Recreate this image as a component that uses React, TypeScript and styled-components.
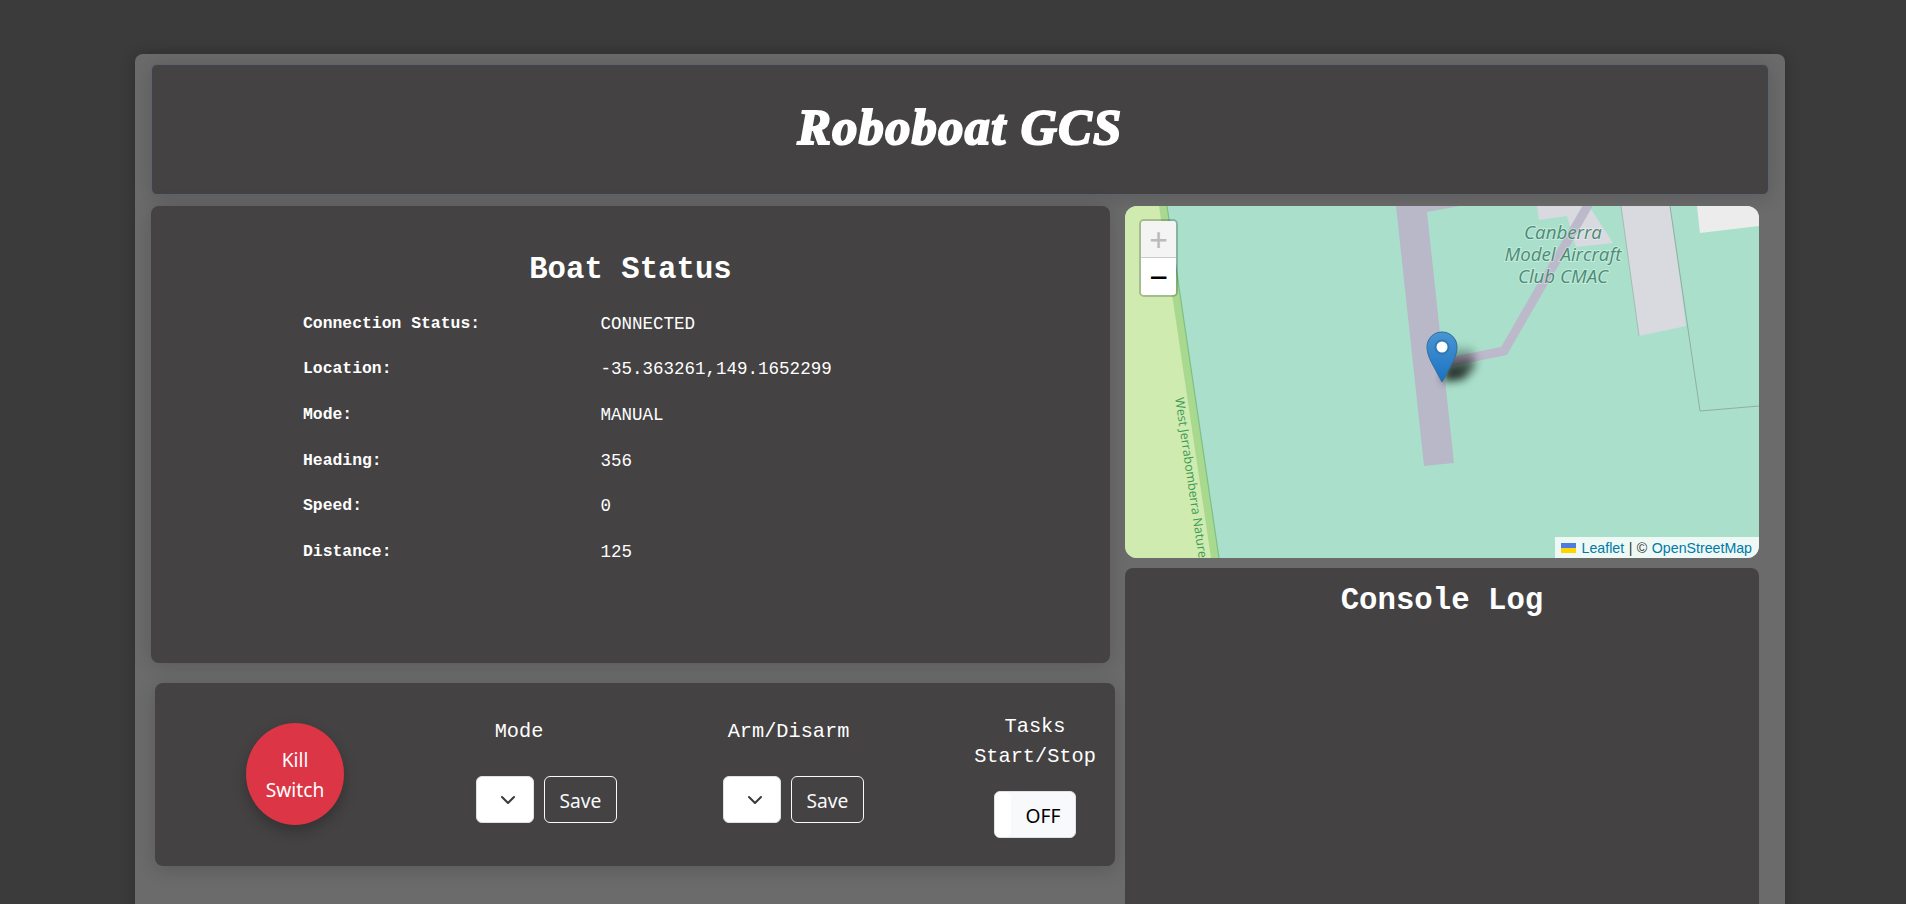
import React from 'react';
import styled, { createGlobalStyle } from 'styled-components';

const GlobalStyle = createGlobalStyle`
  html, body {
    margin: 0;
    height: 100%;
    overflow: hidden;
    background: #3b3b3b;
  }
  * { box-sizing: border-box; }
`;

const MONO = `'Liberation Mono', monospace`;
const SANS = `'Noto Sans', 'Open Sans', sans-serif`;
const PANEL = '#444243';

const Page = styled.div`
  padding: 54px 0 0 135px;
  display: flex;
  height: 100vh;
  background: #3b3b3b;
`;

const Shell = styled.div`
  width: 1650px;
  min-height: 1100px;
  padding: 10px 16px;
  display: flex;
  flex-direction: column;
  gap: 11px;
  background: #6c6b6b;
  border-radius: 8px;
  box-shadow: 0 0 16px rgba(0, 0, 0, 0.2);
`;

const Header = styled.header`
  height: 131px;
  padding-bottom: 6px;
  display: flex;
  align-items: center;
  justify-content: center;
  background: ${PANEL};
  border: 1px solid #5c6470;
  border-radius: 6px;
  box-shadow: 0 2px 20px rgba(0, 0, 0, 0.16);
`;

const Title = styled.h1`
  margin: 0;
  font-family: 'Liberation Serif', serif;
  font-size: 50px;
  font-style: italic;
  font-weight: 700;
  letter-spacing: 1.5px;
  color: #fff;
  -webkit-text-stroke: 2.2px #fff;
`;

const Columns = styled.div`
  display: flex;
  gap: 15px;
`;

const LeftColumn = styled.div`
  width: 959px;
  display: flex;
  flex-direction: column;
  gap: 20px;
`;

const RightColumn = styled.div`
  width: 634px;
  display: flex;
  flex-direction: column;
  gap: 10px;
`;

const StatusPanel = styled.section`
  height: 457px;
  padding-top: 46px;
  background: ${PANEL};
  border-radius: 8px;
  box-shadow: 0 2px 20px rgba(0, 0, 0, 0.16);
`;

const PanelTitle = styled.h2`
  margin: 0;
  font-family: ${MONO};
  font-size: 30.7px;
  line-height: 36px;
  font-weight: 700;
  text-align: center;
  color: #fff;
`;

const StatusTable = styled.div`
  margin-top: 13px;
  padding-left: 152px;
`;

const StatusRow = styled.div`
  height: 45.6px;
  display: flex;
  align-items: center;
`;

const StatusLabel = styled.span`
  width: 297.6px;
  margin-top: -1px;
  font-family: ${MONO};
  font-size: 16.4px;
  font-weight: 700;
  color: #fff;
`;

const StatusValue = styled.span`
  font-family: ${MONO};
  font-size: 17.5px;
  color: #fff;
`;

const ControlPanel = styled.section`
  width: 960px;
  margin-left: 4px;
  padding: 28px 17px 28px 91px;
  display: flex;
  align-items: flex-start;
  background: ${PANEL};
  border-radius: 8px;
  box-shadow: 0 4px 20px rgba(0, 0, 0, 0.16);
`;

const KillButton = styled.button`
  width: 98px;
  height: 102px;
  margin-top: -2px;
  padding: 3px 0 0;
  align-self: center;
  flex: none;
  border: none;
  border-radius: 50%;
  background: #dc3545;
  color: #fff;
  font-family: ${SANS};
  font-size: 19.2px;
  line-height: 30px;
  box-shadow: 0 6px 14px rgba(0, 0, 0, 0.25);
`;

const ControlGroup = styled.div<{ $left: number; $labelShift: number }>`
  width: 141px;
  margin-left: ${p => p.$left}px;
  margin-top: 5px;
  flex: none;
  display: flex;
  flex-direction: column;
  align-items: center;
  gap: 30px;

  & > label {
    margin-right: ${p => p.$labelShift}px;
  }
`;

const ControlLabel = styled.label`
  padding-top: 1px;
  margin-bottom: -1px;
  font-family: ${MONO};
  font-size: 20.3px;
  line-height: 30px;
  text-align: center;
  color: #fff;
  white-space: pre-line;
`;

const ControlRow = styled.div`
  display: flex;
  gap: 10px;
`;

const SelectBox = styled.div`
  width: 58px;
  height: 47px;
  padding-left: 6px;
  display: flex;
  align-items: center;
  justify-content: center;
  background: #fff;
  border: 1px solid #dee2e6;
  border-radius: 6px;
`;

const SaveButton = styled.button`
  width: 73px;
  height: 47px;
  padding: 2px 0 0;
  background: transparent;
  border: 1px solid #f8f9fa;
  border-radius: 6px;
  color: #f8f9fa;
  font-family: ${SANS};
  font-size: 19.2px;
`;

const TasksGroup = styled.div`
  width: 124px;
  margin-left: 109px;
  flex: none;
  display: flex;
  flex-direction: column;
  align-items: center;
  gap: 20px;
`;

const Toggle = styled.div`
  position: relative;
  width: 82px;
  height: 47px;
  padding: 2px 0 0 16px;
  display: flex;
  align-items: center;
  justify-content: center;
  background: #f8f9fa;
  border: 1px solid #dee2e6;
  border-radius: 6px;
  color: #000;
  font-family: ${SANS};
  font-size: 19.2px;
  overflow: hidden;
`;

const ToggleHandle = styled.span`
  position: absolute;
  left: 0;
  top: 0;
  bottom: 0;
  width: 16px;
  background: #fff;
  border-radius: 0 6px 6px 0;
`;

const MapPanel = styled.div`
  position: relative;
  height: 352px;
  overflow: hidden;
  background: #aae0cb;
  border-radius: 12px;
`;

const MapArt = styled.svg`
  display: block;
  width: 634px;
  height: 352px;
`;

const MarkerShadow = styled.svg`
  position: absolute;
  left: 310px;
  top: 125px;
  width: 60px;
  height: 65px;
`;

const MarkerPin = styled.svg`
  position: absolute;
  left: 301px;
  top: 125px;
  width: 32px;
  height: 52px;
`;

const ZoomControl = styled.div`
  position: absolute;
  left: 14px;
  top: 13px;
  width: 39px;
  border: 2px solid rgba(0, 0, 0, 0.2);
  border-radius: 5px;
  background-clip: padding-box;
  display: flex;
  flex-direction: column;
`;

const ZoomButton = styled.div<{ $disabled?: boolean }>`
  height: 37px;
  display: flex;
  align-items: center;
  justify-content: center;
  background: ${p => (p.$disabled ? '#f4f4f4' : '#fff')};
  color: ${p => (p.$disabled ? '#bbb' : '#000')};
  font-family: 'DejaVu Sans Mono', monospace;
  font-size: 30px;
  font-weight: 400;
  border-radius: ${p => (p.$disabled ? '3px 3px 0 0' : '0 0 3px 3px')};
  border-bottom: ${p => (p.$disabled ? '1px solid #ccc' : 'none')};
`;

const Attribution = styled.div`
  position: absolute;
  right: 0;
  bottom: 0;
  height: 21px;
  padding: 0 7px 0 6px;
  display: flex;
  align-items: center;
  gap: 4.5px;
  background: rgba(255, 255, 255, 0.8);
  font-family: 'Liberation Sans', sans-serif;
  font-size: 14.2px;
  color: #333;
`;

const AttributionLink = styled.span`
  color: #0078a8;
`;

const FlagIcon = styled.svg`
  width: 15px;
  height: 10px;
  margin-right: 1px;
`;

const ConsolePanel = styled.section`
  height: 560px;
  padding-top: 15px;
  background: ${PANEL};
  border-radius: 8px;
`;

const STATUS = [
  ['Connection Status:', 'CONNECTED'],
  ['Location:', '-35.363261,149.1652299'],
  ['Mode:', 'MANUAL'],
  ['Heading:', '356'],
  ['Speed:', '0'],
  ['Distance:', '125'],
];

const Chevron = () => (
  <svg width="16" height="16" viewBox="0 0 16 16" fill="none">
    <path d="m2 5 6 6 6-6" stroke="#343a40" strokeWidth="2" strokeLinecap="round" strokeLinejoin="round" />
  </svg>
);

const labelStyle = {
  fontFamily: "'Open Sans', sans-serif",
  fontStyle: 'italic',
  fontSize: 18.7,
  fill: '#4a8c76',
  stroke: 'rgba(255,255,255,0.35)',
  strokeWidth: 2,
  paintOrder: 'stroke',
} as React.CSSProperties;

const MapTiles = () => (
  <MapArt viewBox="0 0 634 352">
    <polygon points="0,0 36,0 88,352 0,352" fill="#cfebb0" />
    <polygon points="34,0 42,0 94,352 86,352" fill="#a9d98e" />
    <polyline points="42,0 94,352" fill="none" stroke="#7cc087" strokeWidth="1.2" />
    <polygon points="412,0 414,14 442,10 451,41 488,37 464,0" fill="#d9d9e0" />
    <polygon points="496,0 545,0 561,120 514,130" fill="#d9d9e0" />
    <polyline points="496,0 514,130" fill="none" stroke="#a3bdb0" strokeWidth="1" />
    <polyline points="545,0 575,205 634,200" fill="none" stroke="#92ad9f" strokeWidth="1" />
    <polygon points="572,0 634,0 634,20 575,27" fill="#ececec" />
    <polyline points="320,157 379,145 466,-6" fill="none" stroke="#bcb9cb" strokeWidth="9" />
    <polygon points="271,0 335,0 302,6 329,257 299,260" fill="#b9b8c9" />
    <text x="438" y="33" textAnchor="middle" style={labelStyle}>Canberra</text>
    <text x="438" y="55" textAnchor="middle" style={labelStyle}>Model Aircraft</text>
    <text x="438" y="77" textAnchor="middle" style={labelStyle}>Club CMAC</text>
    <text
      x="0"
      y="0"
      transform="translate(50 192) rotate(81.6)"
      fontFamily="'Open Sans', sans-serif"
      fontSize="12.5"
      fill="#3d9b55"
    >
      West Jerrabomberra Nature
    </text>
  </MapArt>
);

const Marker = () => (
  <>
    <MarkerShadow viewBox="0 0 60 65">
      <defs>
        <filter id="pin-blur" x="-50%" y="-50%" width="200%" height="200%">
          <feGaussianBlur stdDeviation="5" />
        </filter>
        <linearGradient id="pin-shadow" x1="0" y1="0" x2="0" y2="1">
          <stop offset="0" stopColor="#000" stopOpacity="0.1" />
          <stop offset="0.55" stopColor="#000" stopOpacity="0.6" />
          <stop offset="1" stopColor="#000" stopOpacity="1" />
        </linearGradient>
      </defs>
      <polygon points="8,50 12,16 38,16 40,36 28,48" fill="url(#pin-shadow)" filter="url(#pin-blur)" />
    </MarkerShadow>
    <MarkerPin viewBox="0 0 32 52">
      <defs>
        <linearGradient id="pin-fill" x1="0" y1="0" x2="0" y2="1">
          <stop offset="0" stopColor="#4a94d2" />
          <stop offset="1" stopColor="#1a72c4" />
        </linearGradient>
      </defs>
      <path
        d="M16 1C7.5 1 1 7.5 1 16c0 5 1.5 9 4 14.5L16 51l11-20.5c2.500-5.500 4-9.500 4-14.500C31 7.500 24.500 1 16 1Z"
        fill="url(#pin-fill)"
        stroke="#2d6f9e"
        strokeWidth="1"
      />
      <circle cx="16" cy="16" r="7.500" fill="#2c6c9c" opacity="0.6" />
      <circle cx="16" cy="16" r="5.500" fill="#fff" />
    </MarkerPin>
  </>
);

const App: React.FC = () => (
  <Page>
    <GlobalStyle />
    <Shell>
      <Header>
        <Title>Roboboat GCS</Title>
      </Header>
      <Columns>
        <LeftColumn>
          <StatusPanel>
            <PanelTitle>Boat Status</PanelTitle>
            <StatusTable>
              {STATUS.map(([label, value]) => (
                <StatusRow key={label}>
                  <StatusLabel>{label}</StatusLabel>
                  <StatusValue>{value}</StatusValue>
                </StatusRow>
              ))}
            </StatusTable>
          </StatusPanel>
          <ControlPanel>
            <KillButton>Kill<br />Switch</KillButton>
            <ControlGroup $left={132} $labelShift={55}>
              <ControlLabel>Mode</ControlLabel>
              <ControlRow>
                <SelectBox><Chevron /></SelectBox>
                <SaveButton>Save</SaveButton>
              </ControlRow>
            </ControlGroup>
            <ControlGroup $left={106} $labelShift={10}>
              <ControlLabel>Arm/Disarm</ControlLabel>
              <ControlRow>
                <SelectBox><Chevron /></SelectBox>
                <SaveButton>Save</SaveButton>
              </ControlRow>
            </ControlGroup>
            <TasksGroup>
              <ControlLabel>{'Tasks\nStart/Stop'}</ControlLabel>
              <Toggle>
                <ToggleHandle />
                OFF
              </Toggle>
            </TasksGroup>
          </ControlPanel>
        </LeftColumn>
        <RightColumn>
          <MapPanel>
            <MapTiles />
            <Marker />
            <ZoomControl>
              <ZoomButton $disabled>+</ZoomButton>
              <ZoomButton>−</ZoomButton>
            </ZoomControl>
            <Attribution>
              <FlagIcon viewBox="0 0 15 10">
                <rect width="15" height="5" fill="#4c7be1" />
                <rect y="5" width="15" height="5" fill="#ffd500" />
              </FlagIcon>
              <AttributionLink>Leaflet</AttributionLink>
              <span>|</span>
              <span>©</span>
              <AttributionLink>OpenStreetMap</AttributionLink>
            </Attribution>
          </MapPanel>
          <ConsolePanel>
            <PanelTitle>Console Log</PanelTitle>
          </ConsolePanel>
        </RightColumn>
      </Columns>
    </Shell>
  </Page>
);

export default App;
